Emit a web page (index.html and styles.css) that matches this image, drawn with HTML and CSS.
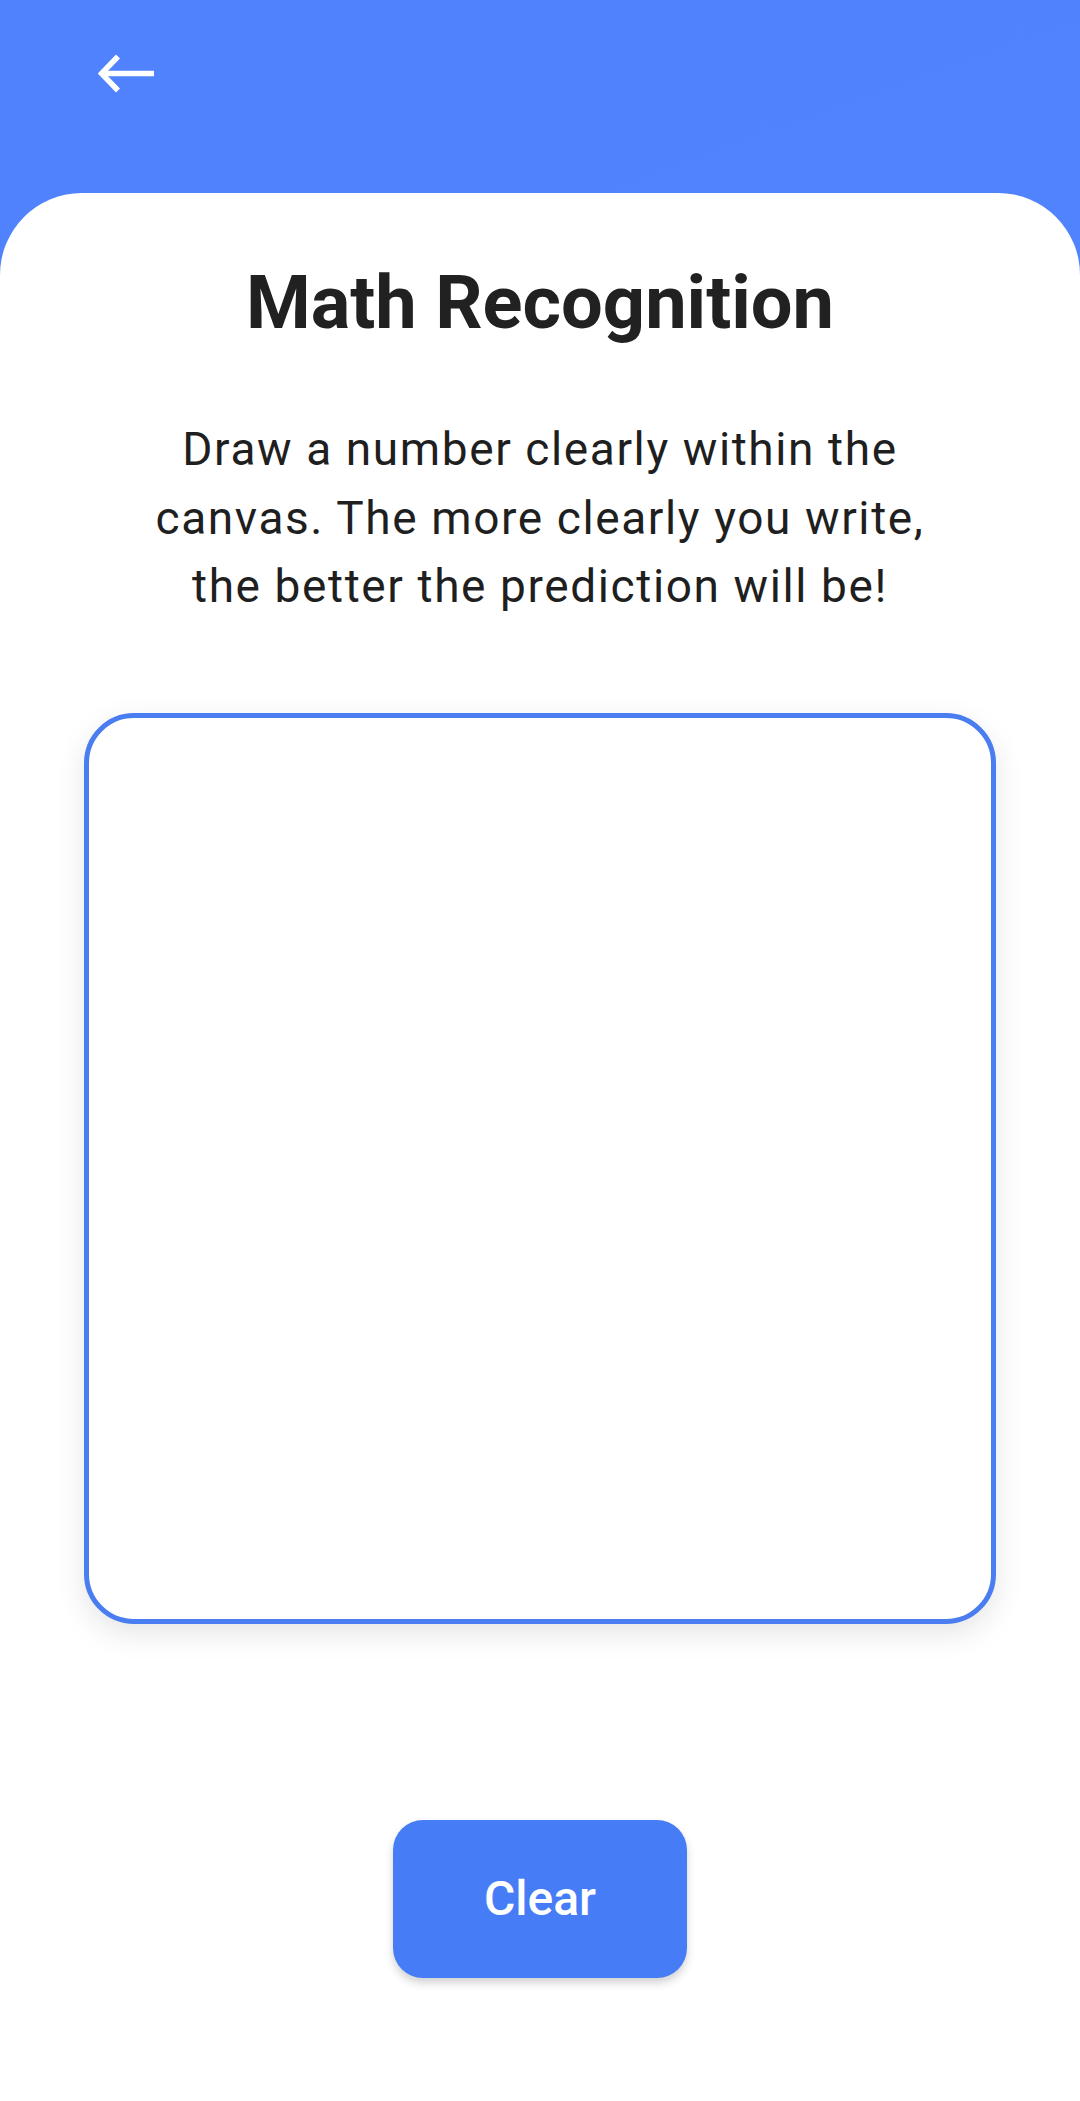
FILE: index.html
```html
<!DOCTYPE html>
<html lang="en">
<head>
<meta charset="utf-8">
<title>Math Recognition</title>
<link rel="stylesheet" href="styles.css">
</head>
<body>
<div class="screen">
  <header class="topbar">
    <button class="back" aria-label="Back">
      <svg width="58" height="40" viewBox="0 0 58 40" fill="none" stroke="#ffffff" stroke-width="5.5" stroke-linecap="butt" stroke-linejoin="miter">
        <path d="M3 19.5 H56"/>
        <path d="M20 2.5 L3.5 19.5 L20 36.5"/>
      </svg>
    </button>
  </header>
  <main class="card">
    <h1 class="title">Math Recognition</h1>
    <p class="desc">Draw a number clearly within the canvas. The more clearly you write, the better the prediction will be!</p>
    <div class="canvas-box"></div>
    <button class="clear">Clear</button>
  </main>
</div>
</body>
</html>
```
FILE: styles.css
```css
* { box-sizing: border-box; }
html, body {
  margin: 0;
  padding: 0;
}
body {
  width: 1080px;
  height: 2101px;
  background: #ffffff;
  font-family: Roboto, "Noto Sans", "Liberation Sans", sans-serif;
  overflow: hidden;
}
.screen {
  height: 2101px;
  display: flex;
  flex-direction: column;
  background: linear-gradient(160deg, #4f82fc 0%, #5385fd 100%);
}
.topbar {
  height: 193px;
  flex: none;
  padding: 54px 0 0 98px;
}
.back {
  background: none;
  border: 0;
  padding: 0;
  margin: 0;
  display: block;
  cursor: pointer;
}
.back svg { display: block; }
.card {
  flex: 1;
  background: #ffffff;
  border-radius: 82px 82px 0 0;
  display: flex;
  flex-direction: column;
  align-items: center;
  padding-top: 66px;
}
.title {
  margin: 0;
  font-size: 74px;
  font-weight: 700;
  line-height: 88px;
  color: #212121;
  letter-spacing: 0;
}
.desc {
  margin: 68px 0 0;
  width: 820px;
  text-align: center;
  font-size: 46px;
  line-height: 68.5px;
  font-weight: 400;
  color: #1f1f1f;
  letter-spacing: 1.6px;
}
.canvas-box {
  margin-top: 92px;
  width: 912px;
  height: 911px;
  border: 5px solid #4a7df0;
  border-radius: 50px;
  background: #ffffff;
  box-shadow: 0 10px 30px rgba(0, 0, 0, 0.10);
  flex: none;
}
.clear {
  margin-top: 196px;
  width: 294px;
  height: 158px;
  border: 0;
  border-radius: 30px;
  background: #477cf7;
  color: #ffffff;
  font-family: Roboto, "Noto Sans", "Liberation Sans", sans-serif;
  font-size: 48px;
  font-weight: 500;
  box-shadow: 0 5px 8px rgba(0, 0, 0, 0.18);
  cursor: pointer;
  flex: none;
}
```
